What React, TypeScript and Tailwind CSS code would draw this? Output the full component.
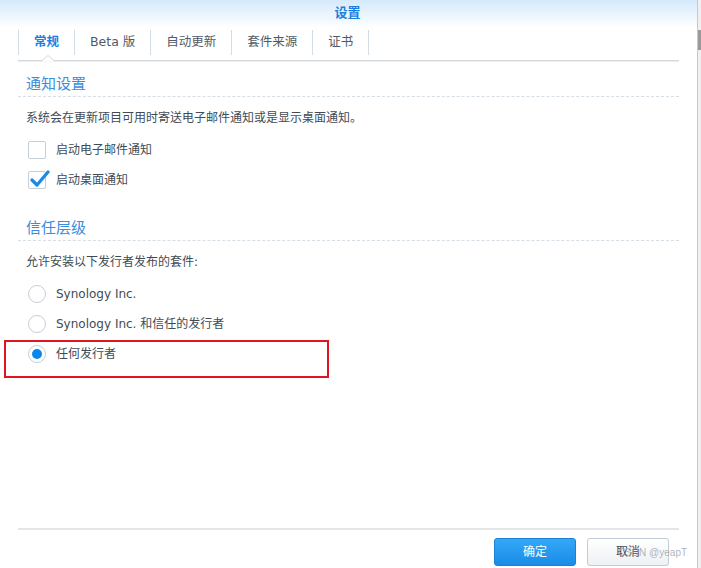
import React from 'react';

const font = { fontFamily: '"DejaVu Sans", "Noto Sans CJK SC", sans-serif' };

type TabProps = { label: string; active?: boolean; first?: boolean };

const Tab = ({ label, active, first }: TabProps) => (
  <div
    className={`relative flex h-[25px] items-center border-r border-[#d3dbe3] px-[15px] text-[12.5px] ${
      first ? 'border-l' : ''
    } ${active ? 'font-bold text-[#1a7fe0]' : 'text-[#505a64]'}`}
  >
    {label}
    {active && (
      <svg className="absolute bottom-[-7px] left-[22px]" width="14" height="7" viewBox="0 0 14 7">
        <path d="M0 6.5 L7 0.5 L14 6.5" fill="white" stroke="#d5d9de" strokeWidth="1" />
      </svg>
    )}
  </div>
);

const Checkbox = ({ checked, label }: { checked?: boolean; label: string }) => (
  <div className="flex h-[30px] items-center">
    <div className="relative h-[18px] w-[18px] rounded-[2px] border border-[#c6ced6] bg-white">
      {checked && (
        <svg className="absolute left-[1px] top-[-3px]" width="20" height="20" viewBox="0 0 20 20">
          <path d="M2 11 L7 16 L18 3" fill="none" stroke="#1b8ae6" strokeWidth="3.2" strokeLinecap="round" strokeLinejoin="round" />
        </svg>
      )}
    </div>
    <span className="ml-[10px] text-[12px] text-[#414b55]">{label}</span>
  </div>
);

const Radio = ({ checked, label }: { checked?: boolean; label: string }) => (
  <div className="flex h-[30px] items-center">
    <div className="flex h-[18px] w-[18px] items-center justify-center rounded-full border border-[#c6ced6] bg-white">
      {checked && <div className="h-[10px] w-[10px] rounded-full bg-[#0a87ee]" />}
    </div>
    <span className="ml-[10px] text-[12px] text-[#414b55]">{label}</span>
  </div>
);

const Section = ({ title }: { title: string }) => (
  <div className="flex h-[36px] items-end border-b border-dashed border-[#d5dde6] pb-[2px] pl-2">
    <span className="text-[15px] leading-[20px] text-[#3a8ddb]">{title}</span>
  </div>
);

export default function App() {
  return (
    <div className="flex h-[568px] w-[701px] bg-white" style={font}>
      <div className="relative flex w-[697px] flex-col">
        <div className="flex h-[28px] items-center justify-center bg-gradient-to-b from-[#d5e9fb] to-white pb-[3px]">
          <span className="ml-[-2px] text-[13px] font-bold text-[#1a7fe0]">设置</span>
        </div>

        <div className="mx-[18px] flex h-[33px] items-start border-b border-[#d5d9de] pt-[2px] shadow-[0_1px_0_#eceef0]">
          <Tab label="常规" active first />
          <Tab label="Beta 版" />
          <Tab label="自动更新" />
          <Tab label="套件来源" />
          <Tab label="证书" />
        </div>

        <div className="flex flex-1 flex-col px-[18px]">
          <Section title="通知设置" />
          <div className="flex h-[38px] items-center pl-2 pt-[4px] text-[12px] text-[#414b55]">
            系统会在更新项目可用时寄送电子邮件通知或是显示桌面通知。
          </div>
          <div className="pl-[10px]">
            <Checkbox label="启动电子邮件通知" />
            <Checkbox checked label="启动桌面通知" />
          </div>

          <div className="mt-[10px]">
            <Section title="信任层级" />
          </div>
          <div className="flex h-[38px] items-center pl-2 pt-[4px] text-[12px] text-[#414b55]">
            允许安装以下发行者发布的套件:
          </div>
          <div className="relative pl-[10px]">
            <Radio label="Synology Inc." />
            <Radio label="Synology Inc. 和信任的发行者" />
            <Radio checked label="任何发行者" />
            <div className="absolute left-[-14px] top-[61px] h-[38px] w-[325px] border-2 border-[#e0151f]" />
          </div>
        </div>

        <div className="mx-[18px] flex h-[40px] items-start justify-end gap-[11px] border-t-2 border-[#e3e5e8] pt-[8px] pr-[10px]">
          <button className="h-[28px] w-[82px] rounded-[3px] border border-[#1b80d6] bg-gradient-to-b from-[#33a8f6] to-[#1a8be8] text-[12px] text-white">
            确定
          </button>
          <button className="h-[28px] w-[82px] rounded-[3px] border border-[#c3ccd6] bg-gradient-to-b from-white to-[#edf1f5] text-[12px] text-[#414b55]">
            取消
          </button>
        </div>

        <span
          className="pointer-events-none absolute left-[618px] top-[545px] z-10 whitespace-nowrap text-[10px] text-[#9aa0a6]/80"
          style={{ fontFamily: '"Liberation Sans", Arial, sans-serif' }}
        >
          CSDN @yeapT
        </span>
      </div>
      <div className="flex w-[4px] flex-col border-l border-[#c9c9c9] bg-[#f0f0f0]">
        <div className="mt-[30px] h-[20px] w-[3px] bg-[#9a9a9a]" />
      </div>
    </div>
  );
}
